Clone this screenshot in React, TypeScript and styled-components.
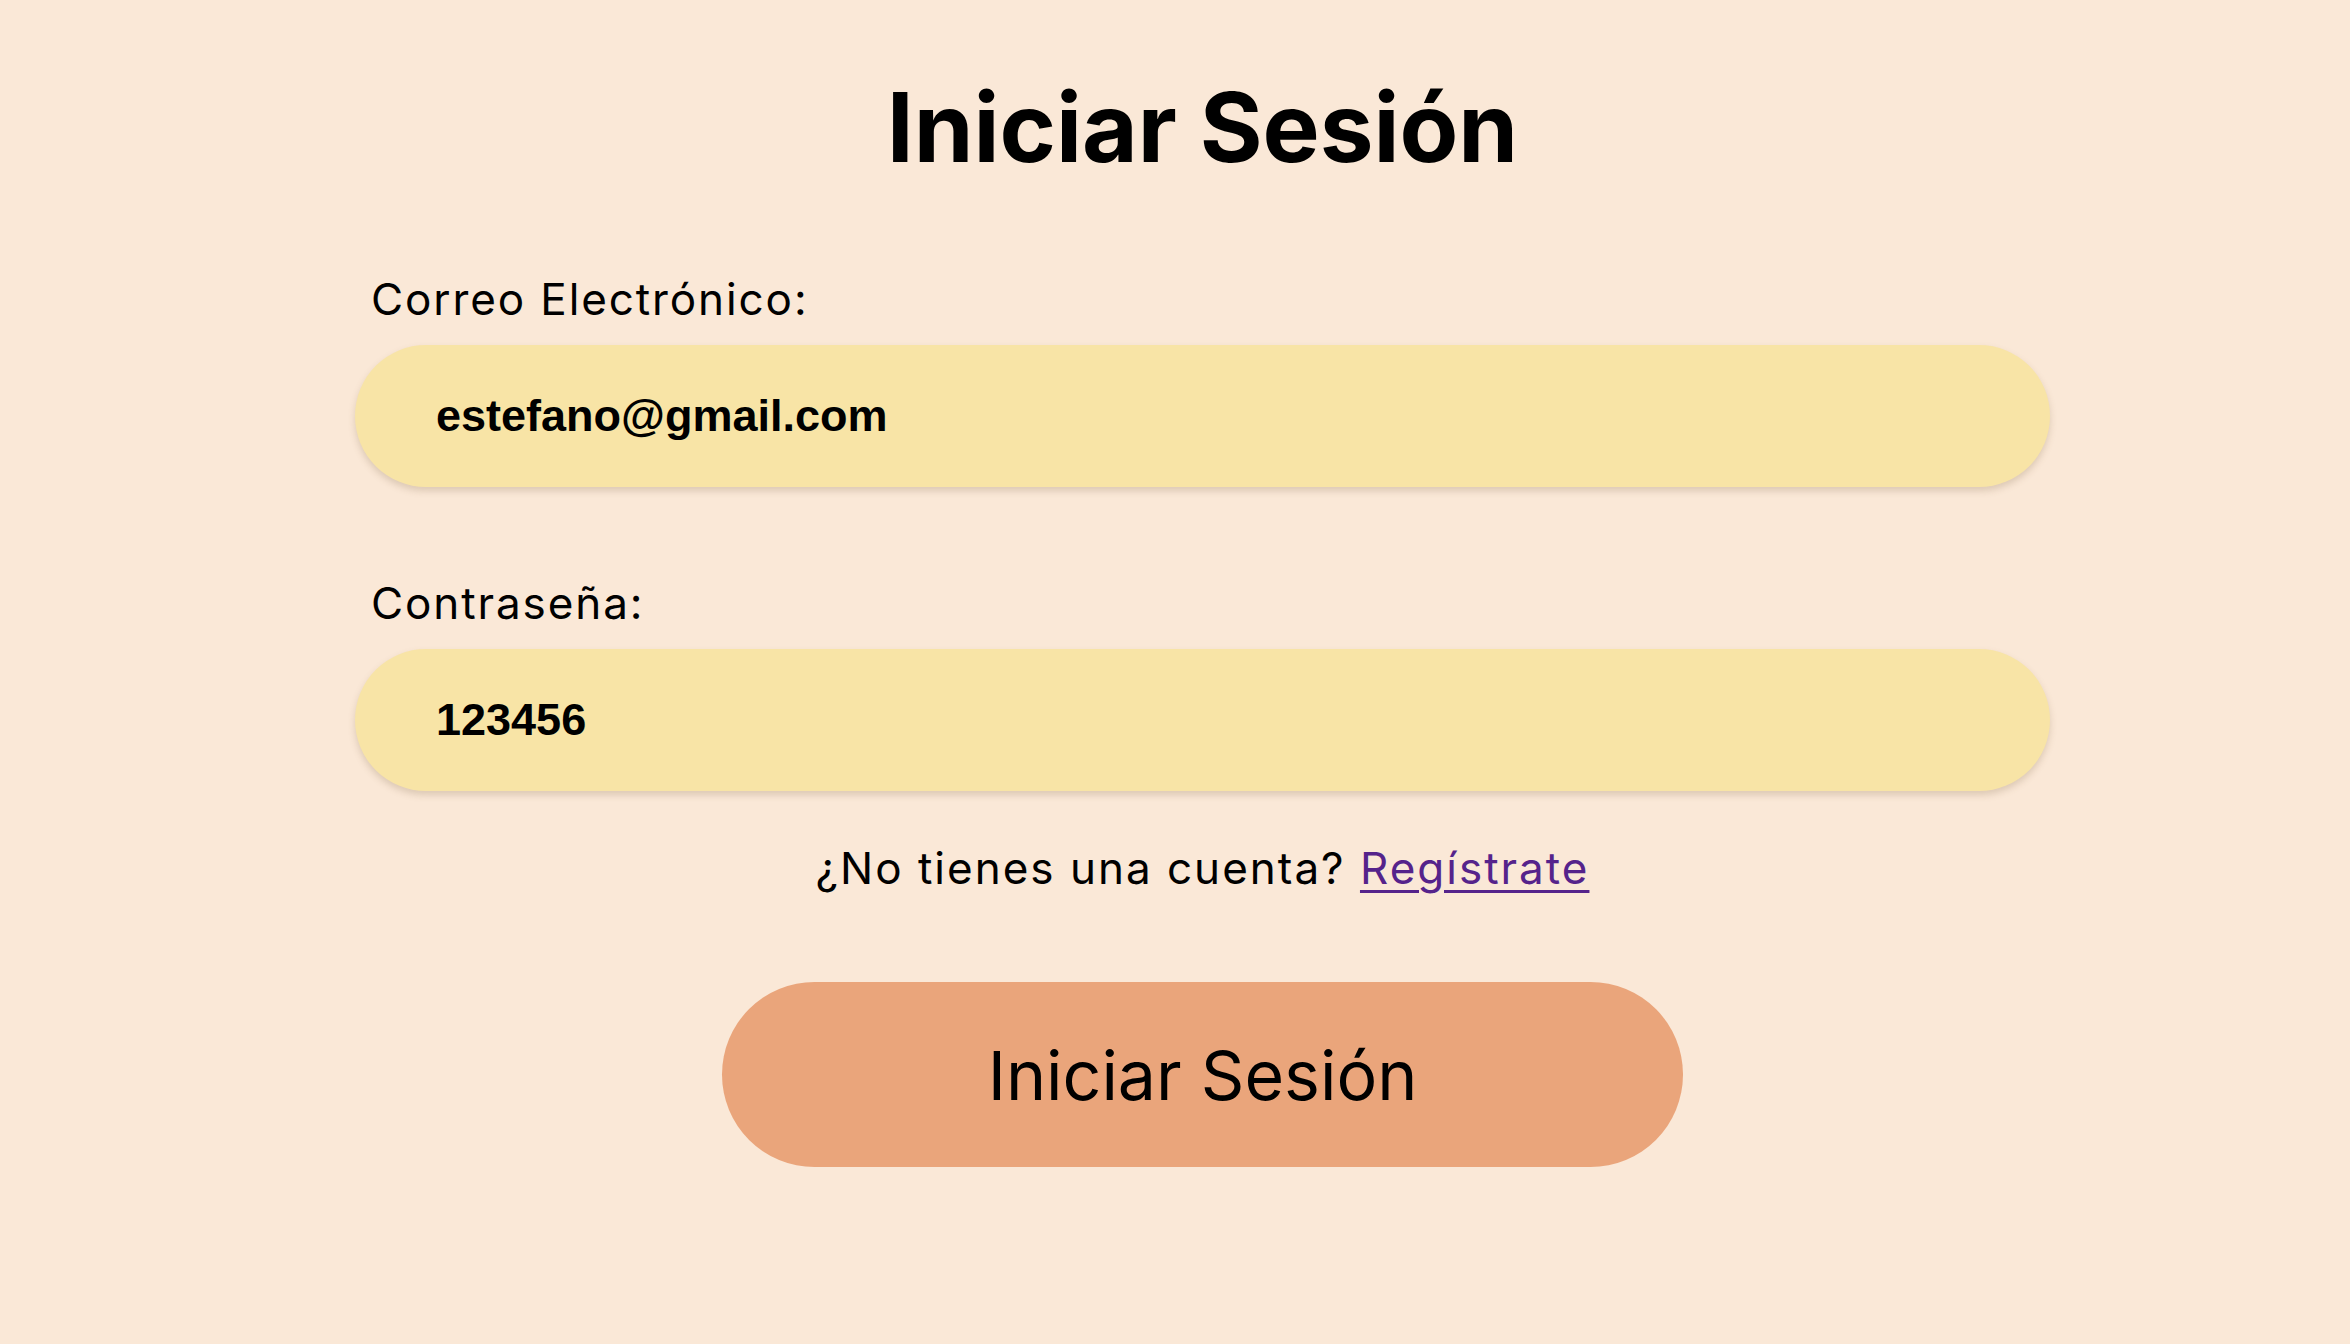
import React from 'react';
import styled, { createGlobalStyle } from 'styled-components';

const GlobalStyle = createGlobalStyle`
  html, body {
    margin: 0;
    padding: 0;
    background: #fae8d7;
  }
  body {
    font-family: Inter, "Noto Sans", sans-serif;
    color: #000;
  }
`;

const Page = styled.main`
  min-height: 100vh;
  box-sizing: border-box;
  padding: 79px 0 0 55px;
  display: flex;
  justify-content: center;
`;

const Form = styled.form`
  width: 1695px;
  display: flex;
  flex-direction: column;
`;

const Title = styled.h1`
  margin: 0 0 101px;
  font-size: 96px;
  line-height: 96px;
  font-weight: 700;
  text-align: center;
`;

const Field = styled.div<{ $gap: number }>`
  display: flex;
  flex-direction: column;
  margin-bottom: ${p => p.$gap}px;
`;

const Label = styled.label`
  font-size: 44px;
  line-height: 46px;
  letter-spacing: 1.9px;
  padding-left: 16px;
  margin-bottom: 23px;
`;

const Input = styled.input`
  box-sizing: border-box;
  width: 100%;
  height: 142px;
  border: none;
  outline: none;
  border-radius: 71px;
  background: #f8e4a6;
  box-shadow: 0 4px 7px rgba(120, 90, 60, 0.22);
  padding: 0 0 0 81px;
  font-family: "Liberation Sans", Arial, sans-serif;
  font-weight: 700;
  font-size: 45px;
  color: #000;
`;

const Hint = styled.p`
  margin: 0 0 92px;
  font-size: 44px;
  line-height: 44px;
  letter-spacing: 2px;
  text-align: center;
`;

const Link = styled.a`
  color: #55238b;
  text-decoration: underline;
  text-underline-offset: 6px;
  text-decoration-thickness: 3px;
`;

const Submit = styled.button`
  align-self: center;
  width: 961px;
  height: 185px;
  border: none;
  border-radius: 93px;
  background: #eaa57b;
  font-family: Inter, "Noto Sans", sans-serif;
  font-size: 68px;
  color: #000;
  cursor: pointer;
`;

export default function App() {
  return (
    <>
      <GlobalStyle />
      <Page>
        <Form onSubmit={e => e.preventDefault()}>
          <Title>Iniciar Sesión</Title>
          <Field $gap={93}>
            <Label htmlFor="email">Correo Electrónico:</Label>
            <Input id="email" type="text" defaultValue="estefano@gmail.com" />
          </Field>
          <Field $gap={55}>
            <Label htmlFor="password">Contraseña:</Label>
            <Input id="password" type="text" defaultValue="123456" />
          </Field>
          <Hint>
            ¿No tienes una cuenta? <Link href="#registro">Regístrate</Link>
          </Hint>
          <Submit type="submit">Iniciar Sesión</Submit>
        </Form>
      </Page>
    </>
  );
}
